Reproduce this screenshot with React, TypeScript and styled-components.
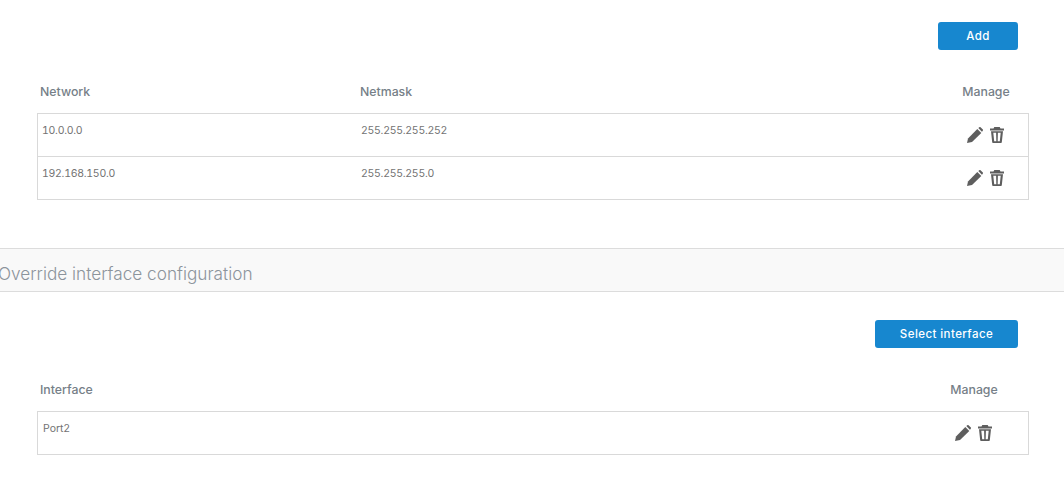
import styled, { createGlobalStyle } from 'styled-components'

const GlobalStyle = createGlobalStyle`
    html, body {
        margin: 0;
        padding: 0;
        background: #fff;
        font-family: Inter, "Liberation Sans", sans-serif;
    }
`

const Page = styled.div`
    width: 1064px;
    height: 480px;
    overflow: hidden;
    display: flex;
    flex-direction: column;
`

const Toolbar = styled.div<{ $inset: number }>`
    display: flex;
    justify-content: flex-end;
    padding-right: ${(props) => props.$inset}px;
`

const Button = styled.button<{ $width: number }>`
    width: ${(props) => props.$width}px;
    height: 28px;
    padding: 0;
    border: 0;
    border-radius: 3px;
    background: #1787cf;
    color: #fff;
    font: 500 11.5px Inter, "Liberation Sans", sans-serif;
    letter-spacing: 0.42px;
`

const Section = styled.section<{ $top: number }>`
    padding: ${(props) => props.$top}px 35px 0 37px;
`

const HeadRow = styled.div<{ $manage: number }>`
    display: grid;
    grid-template-columns: 320px 1fr ${(props) => props.$manage}px;
    height: 63px;
    align-items: end;
    padding-bottom: 14px;
    box-sizing: border-box;
    color: #767f88;
    font-size: 12.3px;
    font-weight: 500;
    line-height: 15px;
`

const HeadCell = styled.div<{ $center?: boolean }>`
    padding-left: ${(props) => (props.$center ? 0 : 3)}px;
    text-align: ${(props) => (props.$center ? 'center' : 'left')};
`

const Table = styled.div`
    border: 1px solid #d9d9d9;
    border-bottom-width: 0;
`

const Row = styled.div<{ $manage: number }>`
    display: grid;
    grid-template-columns: 320px 1fr ${(props) => props.$manage}px;
    height: 42px;
    border-bottom: 1px solid #d9d9d9;
    color: #737373;
    font-size: 10.5px;
    line-height: 14px;
`

const Cell = styled.div<{ $offset: number }>`
    padding: 10px 0 0 ${(props) => props.$offset}px;
`

const AddressCell = styled(Cell)`
    font-variant-numeric: tabular-nums;
    letter-spacing: -0.27px;
`

const Actions = styled.div`
    display: flex;
    justify-content: center;
    align-items: flex-start;
    gap: 7px;
    padding-top: 13px;
    color: #5e5e5e;
`

const SectionBar = styled.h2`
    margin: 48px 0 0;
    height: 44px;
    box-sizing: border-box;
    background: #f9f9f9;
    border-top: 1px solid #dcdcdc;
    border-bottom: 1px solid #dcdcdc;
    color: #8c949c;
    font-size: 17.2px;
    font-weight: 300;
    line-height: 49px;
    text-indent: -2px;
    white-space: nowrap;
`

const SecondBar = styled(Toolbar)`
    margin-top: 28px;
`

function PencilIcon() {
    return (
        <svg width="16" height="16" viewBox="0 0 16 16" fill="currentColor">
            <path d="M0 16l1-4.600L10.300 2.100l4 4L5 15.100z" />
            <path d="M11.300 1.100l.7-.7a1.300 1.300 0 0 1 1.800 0l1.800 1.800a1.300 1.300 0 0 1 0 1.800l-.7.7z" />
        </svg>
    )
}

function TrashIcon() {
    return (
        <svg width="14" height="16" viewBox="0 0 14 16" fill="currentColor">
            <path d="M4.300 0h5.400l.8 1.500H14V3.500H0V1.500h3.500z" />
            <path
                fillRule="evenodd"
                d="M1 4.300h12l-1.200 11a.8.8 0 0 1-.8.7H3a.8.8 0 0 1-.8-.7zM3.300 5.800l.9 8.400h2.100L6.100 5.800zM7.900 5.800l-.2 8.400h2.100l.9-8.400z"
            />
        </svg>
    )
}

function ManageIcons() {
    return (
        <Actions>
            <PencilIcon />
            <TrashIcon />
        </Actions>
    )
}

const networks = [
    { network: '10.0.0.0', netmask: '255.255.255.252' },
    { network: '192.168.150.0', netmask: '255.255.255.0' },
]

export default function App() {
    return (
        <Page>
            <GlobalStyle />
            <Section $top={22}>
                <Toolbar $inset={11}>
                    <Button $width={80}>Add</Button>
                </Toolbar>
                <HeadRow $manage={86}>
                    <HeadCell>Network</HeadCell>
                    <HeadCell>Netmask</HeadCell>
                    <HeadCell $center>Manage</HeadCell>
                </HeadRow>
                <Table>
                    {networks.map((item) => (
                        <Row $manage={86} key={item.network}>
                            <AddressCell $offset={4}>{item.network}</AddressCell>
                            <AddressCell $offset={3}>{item.netmask}</AddressCell>
                            <ManageIcons />
                        </Row>
                    ))}
                </Table>
            </Section>
            <SectionBar>Override interface configuration</SectionBar>
            <SecondBar $inset={46}>
                <Button $width={143}>Select interface</Button>
            </SecondBar>
            <Section $top={0}>
                <HeadRow $manage={110}>
                    <HeadCell>Interface</HeadCell>
                    <HeadCell />
                    <HeadCell $center>Manage</HeadCell>
                </HeadRow>
                <Table>
                    <Row $manage={110}>
                        <Cell $offset={5}>Port2</Cell>
                        <Cell $offset={3} />
                        <ManageIcons />
                    </Row>
                </Table>
            </Section>
        </Page>
    )
}
